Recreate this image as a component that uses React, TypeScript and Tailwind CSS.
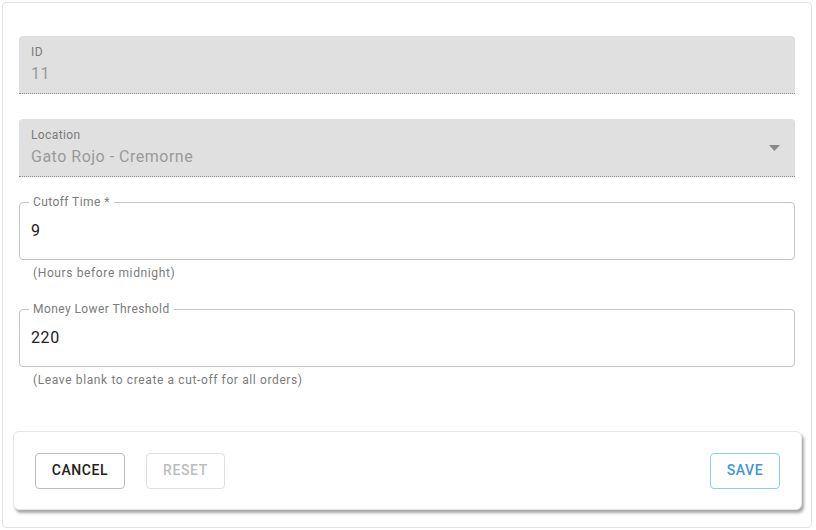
import React from "react";

function FilledField({ label, value, select }: { label: string; value: string; select?: boolean }) {
  return (
    <div className="relative h-[58px] bg-[#e0e0e0] rounded-t-[4px] border-b border-dotted border-[#8f8f8f] px-3 pt-[9px] flex flex-col">
      <div className="text-[12px] leading-[14px] tracking-[0.4px] text-[#7b7b7b]">{label}</div>
      <div className="text-[16px] leading-[20px] tracking-[0.5px] mt-[5px] text-[#9a9a9a]">{value}</div>
      {select && (
        <svg className="absolute right-[15px] top-[26px]" width="11" height="6" viewBox="0 0 11 6">
          <path d="M0 0 L11 0 L5.5 6 Z" fill="#8a8a8a" />
        </svg>
      )}
    </div>
  );
}

function OutlinedField({ label, value, helper }: { label: string; value: string; helper: string }) {
  return (
    <div>
      <div className="relative h-[58px] border border-[#c4c4c4] rounded-[4px] px-[11px] flex items-center">
        <span className="absolute left-[9px] top-[-8px] px-[4px] bg-white text-[12px] leading-[14px] tracking-[0.42px] text-[#7b7b7b]">
          {label}
        </span>
        <span className="text-[16px] leading-[20px] tracking-[0.6px] text-[#212121]">{value}</span>
      </div>
      <div className="mt-[6px] ml-[14px] text-[12px] leading-[14px] tracking-[0.62px] text-[#7b7b7b]">{helper}</div>
    </div>
  );
}

export default function App() {
  return (
    <div className="w-[816px] h-[530px] bg-white pt-[2px] pl-[2px]" style={{ fontFamily: "Roboto, 'Liberation Sans', sans-serif" }}>
      <div className="w-[810px] h-[526px] border border-[#e4e4e4] rounded-[4px] bg-white flex flex-col">
        <div className="px-4 pt-[33px] flex flex-col">
          <FilledField label="ID" value="11" />
          <div className="h-[25px]" />
          <FilledField label="Location" value="Gato Rojo - Cremorne" select />
          <div className="h-[25px]" />
          <OutlinedField label="Cutoff Time *" value="9" helper="(Hours before midnight)" />
          <div className="h-[29px]" />
          <OutlinedField label="Money Lower Threshold" value="220" helper="(Leave blank to create a cut-off for all orders)" />
        </div>
        <div className="pl-[10px] pr-[9px] mt-[44px]">
          <div className="h-[79px] rounded-[6px] bg-white border border-[#e6e6e6] shadow-[2px_3px_3px_rgba(0,0,0,0.35)] flex items-center px-[21px]">
            <button className="h-[36px] w-[90px] border border-[#bdbdbd] rounded-[4px] text-[14px] font-medium tracking-[0.6px] text-[#212121]">
              CANCEL
            </button>
            <button className="ml-[21px] h-[36px] w-[79px] border border-[#e0e0e0] rounded-[4px] text-[14px] font-medium tracking-[0.6px] text-[#bdbdbd]">
              RESET
            </button>
            <div className="flex-1" />
            <button className="h-[36px] w-[70px] border border-[#90caf9] rounded-[4px] text-[14px] font-medium tracking-[0.6px] text-[#3f93e8]">
              SAVE
            </button>
          </div>
        </div>
      </div>
    </div>
  );
}
